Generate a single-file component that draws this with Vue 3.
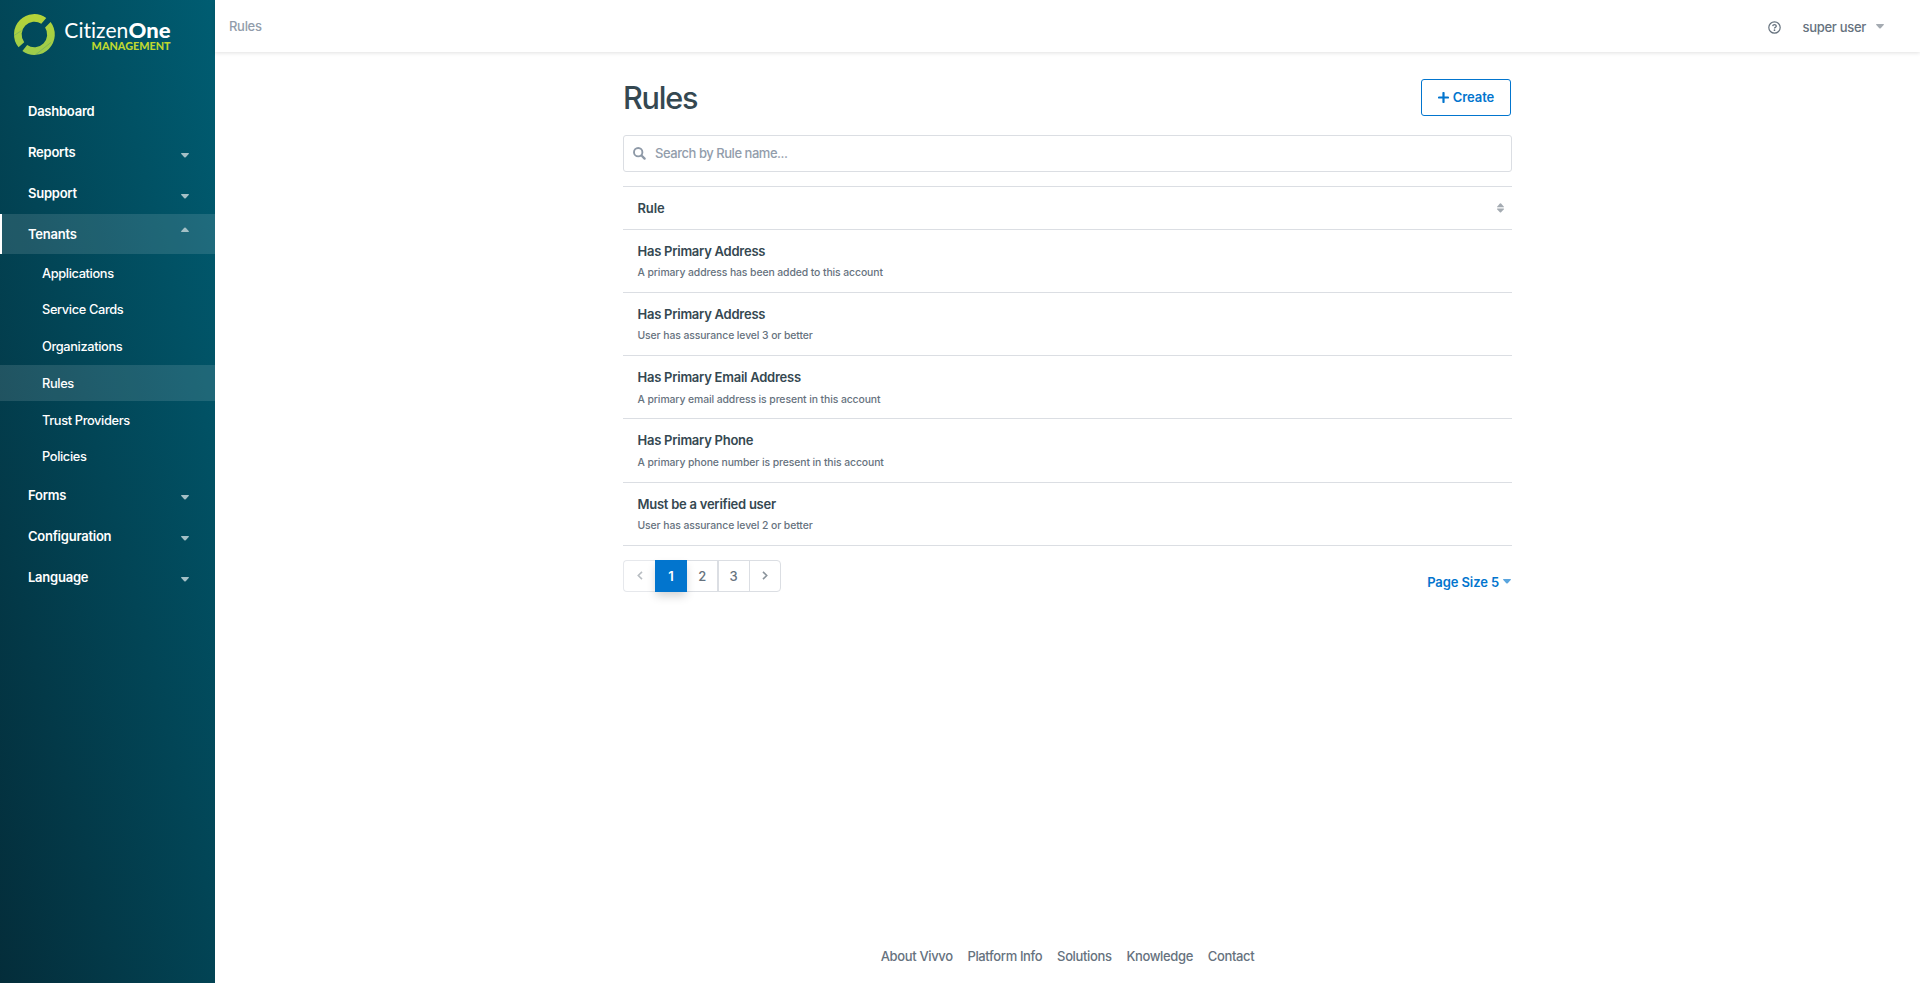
<script setup>
const nav = [
  { label: 'Dashboard' },
  { label: 'Reports', caret: true },
  { label: 'Support', caret: true },
  {
    label: 'Tenants',
    caret: true,
    open: true,
    children: ['Applications', 'Service Cards', 'Organizations', 'Rules', 'Trust Providers', 'Policies'],
  },
  { label: 'Forms', caret: true },
  { label: 'Configuration', caret: true },
  { label: 'Language', caret: true },
]

const rules = [
  { name: 'Has Primary Address', text: 'A primary address has been added to this account' },
  { name: 'Has Primary Address', text: 'User has assurance level 3 or better' },
  { name: 'Has Primary Email Address', text: 'A primary email address is present in this account' },
  { name: 'Has Primary Phone', text: 'A primary phone number is present in this account' },
  { name: 'Must be a verified user', text: 'User has assurance level 2 or better' },
]

const links = ['About Vivvo', 'Platform Info', 'Solutions', 'Knowledge', 'Contact']
</script>

<template>
  <div class="app">
    <aside class="sidebar">
      <svg class="logo" width="215" height="70" viewBox="0 0 215 70">
        <defs>
          <linearGradient id="ring" x1="0" y1="0" x2="0" y2="1">
            <stop offset="0" stop-color="#b5d438" />
            <stop offset="1" stop-color="#9ccb4c" />
          </linearGradient>
        </defs>
        <path
          fill="url(#ring)"
          d="M46.25 17.9A20.4 20.4 0 0 0 19.97 20.07A20.4 20.4 0 0 0 18.55 47.3L24.2 42.2A12.8 12.8 0 0 1 25.35 25.45A12.8 12.8 0 0 1 41.3 23.7Z M50.6 22.1A20.4 20.4 0 0 1 48.83 48.93A20.4 20.4 0 0 1 22.4 51L27.15 45.05A12.8 12.8 0 0 0 43.45 43.55A12.8 12.8 0 0 0 45.1 27.5Z"
        />
        <g stroke="#5da070" stroke-width=".5">
          <path d="M14.2 35.4L21.6 30.6M36 54.4L51 42.4" />
        </g>
        <text class="brand" x="64.3" y="38" textLength="64" lengthAdjust="spacingAndGlyphs">Citizen</text>
        <text class="brand brand-one" x="128.5" y="38" textLength="42" lengthAdjust="spacingAndGlyphs">One</text>
        <text class="brand-sub" x="91.6" y="50" textLength="79" lengthAdjust="spacingAndGlyphs">MANAGEMENT</text>
      </svg>
      <nav class="nav">
        <template v-for="item in nav" :key="item.label">
          <a class="nav-item" :class="{ open: item.open }">
            <span>{{ item.label }}</span>
            <svg v-if="item.caret" class="caret" width="8" height="5" viewBox="0 0 8 5">
              <path d="M.5 0h7q.7.3.2 1L4.7 4.3q-.7.6-1.4 0L.3 1Q-.2.3.5 0Z" />
            </svg>
          </a>
          <div v-if="item.children" class="subnav">
            <a v-for="child in item.children" :key="child" class="sub-item" :class="{ current: child === 'Rules' }">{{ child }}</a>
          </div>
        </template>
      </nav>
    </aside>

    <div class="page">
      <header class="topbar">
        <span class="crumb">Rules</span>
        <div class="user">
          <svg width="13" height="13" viewBox="0 0 13 13" fill="none" stroke="#66727e">
            <circle cx="6.5" cy="6.5" r="5.7" stroke-width="1.2" />
            <path d="M4.7 5.1Q4.9 3.6 6.5 3.6T8.3 5.1Q8.3 5.9 7.3 6.4Q6.5 6.8 6.5 7.6" stroke-width="1.3" />
            <circle cx="6.5" cy="9.2" r=".85" fill="#66727e" stroke="none" />
          </svg>
          <span class="user-name">super user</span>
          <svg class="user-caret" width="8" height="5" viewBox="0 0 8 5">
            <path d="M.5 0h7q.7.3.2 1L4.7 4.3q-.7.6-1.4 0L.3 1Q-.2.3.5 0Z" fill="#a5abb2" />
          </svg>
        </div>
      </header>

      <main class="content">
        <div class="title-row">
          <h1>Rules</h1>
          <button class="create" type="button">
            <svg width="11" height="11" viewBox="0 0 11 11">
              <path d="M5.5 1v9M1 5.5h9" stroke="#0275ce" stroke-width="2.2" stroke-linecap="round" />
            </svg>
            <span>Create</span>
          </button>
        </div>

        <div class="search">
          <svg width="13" height="13" viewBox="0 0 13 13" fill="none" stroke="#8e99a7">
            <circle cx="5.2" cy="5.2" r="4.2" stroke-width="1.9" />
            <path d="M8.5 8.5L11.6 11.6" stroke-width="2.3" stroke-linecap="round" />
          </svg>
          <span>Search by Rule name...</span>
        </div>

        <div class="table">
          <div class="table-head">
            <span>Rule</span>
            <svg width="7" height="10" viewBox="0 0 7 10" fill="#a4abb2">
              <path d="M.4 4.2Q-.3 4.2.3 3.4L2.9.5Q3.5 0 4.1.5L6.7 3.4Q7.3 4.2 6.6 4.2Z" />
              <path d="M.4 5.6Q-.3 5.6.3 6.4L2.9 9.3Q3.5 9.8 4.1 9.3L6.7 6.4Q7.3 5.6 6.6 5.6Z" />
            </svg>
          </div>
          <div v-for="(rule, i) in rules" :key="i" class="row">
            <div class="name">{{ rule.name }}</div>
            <div class="desc">{{ rule.text }}</div>
          </div>
        </div>

        <div class="bottom">
          <div class="pager">
            <span class="cell disabled">
              <svg width="6" height="9" viewBox="0 0 6 9"><path d="M5 .9L1.3 4.5L5 8.1" /></svg>
            </span>
            <span class="cell active">1</span>
            <span class="cell">2</span>
            <span class="cell">3</span>
            <span class="cell">
              <svg width="6" height="9" viewBox="0 0 6 9"><path d="M1 .9L4.7 4.5L1 8.1" /></svg>
            </span>
          </div>
          <div class="page-size">
            <span>Page Size 5</span>
            <svg width="8" height="5" viewBox="0 0 8 5">
              <path d="M.5 0h7q.7.3.2 1L4.7 4.3q-.7.6-1.4 0L.3 1Q-.2.3.5 0Z" fill="#5aa5de" />
            </svg>
          </div>
        </div>
      </main>

      <footer class="footer">
        <a v-for="link in links" :key="link">{{ link }}</a>
      </footer>
    </div>
  </div>
</template>

<style>
html,
body {
  margin: 0;
  background: #fff;
}
</style>

<style scoped>
* {
  box-sizing: border-box;
}
.app {
  display: flex;
  height: 983px;
  overflow: hidden;
  font-family: Inter, "Liberation Sans", sans-serif;
  font-size: 13px;
  color: #354851;
}
.sidebar {
  width: 215px;
  flex: none;
  background: linear-gradient(76deg, #042d3a, #005d72);
}
.logo {
  display: block;
}
.brand {
  font: 400 21px Lato, sans-serif;
  font-variant-ligatures: none;
  fill: #fff;
}
.brand-one {
  font-weight: 900;
}
.brand-sub {
  font: 900 10.3px Lato, sans-serif;
  fill: #bfd730;
}
.nav {
  display: flex;
  flex-direction: column;
  padding-top: 21px;
  color: #fff;
}
.nav-item {
  display: flex;
  align-items: center;
  justify-content: space-between;
  height: 40px;
  margin-bottom: 1px;
  padding: 0 26px 0 28px;
  font-weight: 600;
  letter-spacing: -0.24px;
}
.nav-item.open {
  background: rgba(255, 255, 255, 0.12);
  box-shadow: inset 2px 0 #fff;
}
.caret {
  margin-top: 6px;
  fill: #a4c0c6;
}
.open .caret {
  transform: rotate(180deg);
  margin: 0 0 9px;
}
.subnav {
  height: 219.6px;
  margin-bottom: 0.4px;
  display: flex;
  flex-direction: column;
  justify-content: space-between;
}
.sub-item {
  height: 36px;
  line-height: 36px;
  padding: 0.7px 0 0 42px;
  font-size: 12.8px;
  font-weight: 500;
  letter-spacing: -0.36px;
}
.sub-item.current {
  background: rgba(255, 255, 255, 0.12);
}
.page {
  flex: 1;
  display: flex;
  flex-direction: column;
  align-items: center;
}
.topbar {
  width: 100%;
  height: 52px;
  display: flex;
  align-items: center;
  justify-content: space-between;
  padding: 0 36px 0 14px;
  box-shadow: 0 1px 4px rgba(0, 0, 0, 0.12);
}
.crumb {
  color: #929dab;
  font-weight: 500;
  letter-spacing: -0.3px;
}
.user {
  display: flex;
  align-items: center;
  margin-top: 3px;
  font-weight: 500;
  letter-spacing: -0.3px;
  color: #66727e;
}
.user-name {
  margin: -2px 10px 0 22px;
}
.user-caret {
  margin-top: -2px;
}
.content {
  width: 889px;
  flex: 1;
  padding-top: 27px;
}
.title-row {
  display: flex;
  justify-content: space-between;
  height: 37px;
  padding-right: 1px;
}
h1 {
  margin: 0;
  font-size: 30.6px;
  line-height: 38px;
  font-weight: 500;
  letter-spacing: -1.2px;
}
.create {
  width: 90px;
  height: 37px;
  display: flex;
  align-items: center;
  justify-content: center;
  gap: 4px;
  padding: 0 0 1px;
  border: 1px solid #0275ce;
  border-radius: 3px;
  background: #fff;
  color: #0275ce;
  font: inherit;
  font-weight: 600;
  letter-spacing: -0.1px;
}
.search {
  height: 37px;
  margin-top: 19px;
  padding-left: 9px;
  display: flex;
  align-items: center;
  gap: 9px;
  border: 1px solid #dbdee3;
  border-radius: 3px;
  color: #929dab;
  font-weight: 450;
  letter-spacing: -0.46px;
}
.search span {
  margin-top: -1px;
}
.table {
  margin-top: 14px;
  border-top: 1px solid #dbdee3;
}
.table-head {
  height: 43px;
  display: flex;
  align-items: center;
  justify-content: space-between;
  padding: 0 8px 0 14.5px;
  border-bottom: 1px solid #dbdee3;
  font-weight: 600;
  letter-spacing: -0.15px;
}
.row {
  height: 63.15px;
  padding: 12px 14px 0 14.5px;
  border-bottom: 1px solid #dbdee3;
}
.name {
  line-height: 18px;
  font-weight: 600;
  letter-spacing: -0.25px;
}
.desc {
  margin-top: 5.3px;
  font-size: 10.4px;
  line-height: 16px;
  font-weight: 500;
  letter-spacing: -0.09px;
  color: #66727e;
}
.bottom {
  display: flex;
  justify-content: space-between;
  padding-top: 14.25px;
}
.pager {
  display: flex;
  height: 32px;
  color: #66727e;
}
.cell {
  width: 32.3px;
  margin-left: -0.8px;
  display: flex;
  align-items: center;
  justify-content: center;
  border: 1px solid #dbdee3;
  font-weight: 500;
}
.cell:first-child {
  margin-left: 0;
  border-radius: 4px 0 0 4px;
  border-right: 0;
}
.cell:last-child {
  border-radius: 0 4px 4px 0;
}
.cell svg {
  fill: none;
  stroke: #8b949c;
  stroke-width: 1.6;
}
.cell.disabled {
  border-color: #e6e8ec;
}
.cell.disabled svg {
  stroke: #b8bdc2;
}
.cell.active {
  width: 32.8px;
  margin-right: -0.5px;
  z-index: 1;
  border-color: #0275ce;
  background: #0275ce;
  color: #fff;
  font-weight: 600;
  box-shadow: 0 5px 10px -1px rgba(0, 0, 0, 0.18);
}
.page-size {
  display: flex;
  align-items: center;
  gap: 4px;
  height: 16px;
  margin: 13.75px 1px 0 0;
  color: #0275ce;
  font-weight: 600;
  letter-spacing: -0.1px;
}
.footer {
  display: flex;
  gap: 14.8px;
  height: 36px;
  margin-bottom: 9px;
  line-height: 36px;
  font-weight: 450;
  letter-spacing: -0.36px;
  color: #66727e;
}
</style>
